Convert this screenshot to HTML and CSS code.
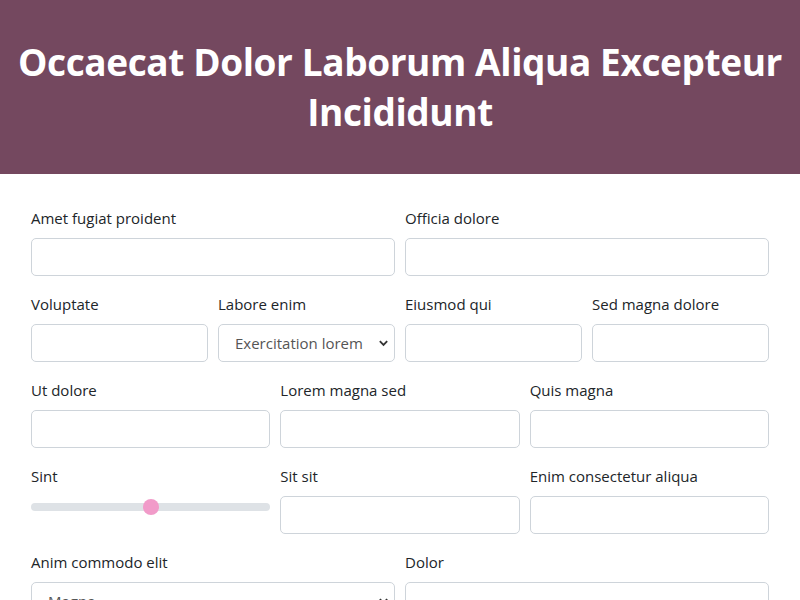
FILE: index.html
```html
<!DOCTYPE html>
<html lang="en">
<head>
<meta charset="utf-8">
<title>Form</title>
<link rel="stylesheet" href="styles.css">
</head>
<body>
<header class="hero">
  <h1 class="hero-title">Occaecat Dolor Laborum Aliqua Excepteur Incididunt</h1>
</header>
<main class="form">
  <div class="row cols-2">
    <div class="field"><label class="label">Amet fugiat proident</label><input class="input" type="text"></div>
    <div class="field"><label class="label">Officia dolore</label><input class="input" type="text"></div>
  </div>
  <div class="row cols-4">
    <div class="field"><label class="label">Voluptate</label><input class="input" type="text"></div>
    <div class="field"><label class="label">Labore enim</label><select class="input select"><option>Exercitation lorem</option></select></div>
    <div class="field"><label class="label">Eiusmod qui</label><input class="input" type="text"></div>
    <div class="field"><label class="label">Sed magna dolore</label><input class="input" type="text"></div>
  </div>
  <div class="row cols-3">
    <div class="field"><label class="label">Ut dolore</label><input class="input" type="text"></div>
    <div class="field"><label class="label">Lorem magna sed</label><input class="input" type="text"></div>
    <div class="field"><label class="label">Quis magna</label><input class="input" type="text"></div>
  </div>
  <div class="row cols-3">
    <div class="field"><label class="label">Sint</label><input class="range" type="range" min="0" max="100" value="50"></div>
    <div class="field"><label class="label">Sit sit</label><input class="input" type="text"></div>
    <div class="field"><label class="label">Enim consectetur aliqua</label><input class="input" type="text"></div>
  </div>
  <div class="row cols-2">
    <div class="field"><label class="label">Anim commodo elit</label><select class="input select"><option>Magna</option></select></div>
    <div class="field"><label class="label">Dolor</label><input class="input" type="text"></div>
  </div>
</main>
</body>
</html>
```
FILE: styles.css
```css
* { box-sizing: border-box; }
html, body { margin: 0; padding: 0; }
body {
  font-family: "Open Sans", "Noto Sans", sans-serif;
  color: #212529;
  background: #fff;
}
.hero {
  background: #74485f;
  color: #fff;
  padding: 37px 4px;
  text-align: center;
}
.hero-title {
  margin: 0;
  font-size: 37px;
  line-height: 50px;
  font-weight: 700;
  letter-spacing: -0.4px;
}
.form {
  padding: 32px 31px;
  display: flex;
  flex-direction: column;
  gap: 16px;
}
.row { display: grid; gap: 10px; }
.cols-2 { grid-template-columns: repeat(2, 1fr); }
.cols-3 { grid-template-columns: repeat(3, 1fr); }
.cols-4 { grid-template-columns: repeat(4, 1fr); }
.field { display: flex; flex-direction: column; min-width: 0; }
.label {
  font-size: 15px;
  line-height: 24px;
  margin-bottom: 8px;
}
.input {
  height: 38px;
  width: 100%;
  border: 1px solid #ced4da;
  border-radius: 5px;
  background: #fff;
  font: inherit;
  font-size: 15px;
  padding: 0 16px;
  color: #555;
}
.select {
  appearance: none;
  -webkit-appearance: none;
  background-image: url("data:image/svg+xml,%3Csvg xmlns='http://www.w3.org/2000/svg' width='12' height='8' viewBox='0 0 12 8'%3E%3Cpath d='M2 2l4 4 4-4' fill='none' stroke='%23333' stroke-width='2'/%3E%3C/svg%3E");
  background-repeat: no-repeat;
  background-position: right 5px center;
  background-size: 11px 8px;
  padding-right: 24px;
}
.range {
  -webkit-appearance: none;
  appearance: none;
  width: 100%;
  height: 22px;
  margin: 0;
  background: transparent;
}
.range::-webkit-slider-runnable-track {
  height: 8px;
  background: #dee2e6;
  border-radius: 4px;
}
.range::-webkit-slider-thumb {
  -webkit-appearance: none;
  width: 16px;
  height: 16px;
  border-radius: 50%;
  background: #f19bc9;
  margin-top: -4px;
  border: 0;
}
```
